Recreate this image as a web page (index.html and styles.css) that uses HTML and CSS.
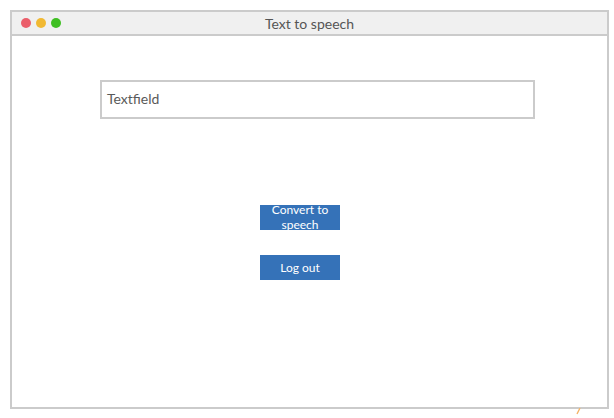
FILE: index.html
```html
<!DOCTYPE html>
<html>
<head>
<meta charset="utf-8">
<link rel="stylesheet" href="styles.css">
</head>
<body>
<div class="window">
  <div class="titlebar">
    <div class="lights">
      <span class="light red"></span>
      <span class="light yellow"></span>
      <span class="light green"></span>
    </div>
    <div class="title">Text to speech</div>
  </div>
  <div class="content">
    <div class="textfield">Textfield</div>
    <div class="btn btn-convert"><span>Convert to speech</span></div>
    <div class="btn btn-logout"><span>Log out</span></div>
  </div>
</div>
<svg class="mark" width="8" height="8" viewBox="0 0 8 8"><line x1="5" y1="0" x2="2" y2="6" stroke="#f4b466" stroke-width="1.4"/></svg>
</body>
</html>
```
FILE: styles.css
```css
html, body {
  margin: 0;
  padding: 0;
  background: #ffffff;
}
body {
  width: 614px;
  height: 418px;
  position: relative;
  overflow: hidden;
  font-family: Lato, "Liberation Sans", sans-serif;
}
.window {
  box-sizing: border-box;
  margin: 10px 0 0 10px;
  width: 599px;
  height: 399px;
  border: 2px solid #cbcbcb;
  display: flex;
  flex-direction: column;
}
.titlebar {
  height: 22px;
  flex: 0 0 22px;
  background: #f0f0f0;
  border-bottom: 2px solid #cbcbcb;
  position: relative;
  display: flex;
  align-items: center;
  justify-content: center;
}
.lights {
  position: absolute;
  left: 9px;
  top: 6px;
  display: flex;
  gap: 5px;
}
.light {
  width: 10px;
  height: 10px;
  border-radius: 50%;
  display: block;
}
.red { background: #eb5e6a; }
.yellow { background: #f1b933; }
.green { background: #3fbf23; }
.title {
  font-size: 14px;
  color: #555555;
  line-height: 22px;
  margin-top: 1px;
}
.content {
  flex: 1;
  display: flex;
  flex-direction: column;
  align-items: flex-start;
  padding: 44px 0 0 88px;
}
.textfield {
  box-sizing: border-box;
  width: 435px;
  height: 39px;
  border: 2px solid #cbcbcb;
  padding: 0 0 2px 5px;
  font-size: 14px;
  color: #595959;
  display: flex;
  align-items: center;
}
.btn {
  box-sizing: border-box;
  width: 80px;
  height: 25px;
  margin-left: 160px;
  background: #3572b8;
  color: #ffffff;
  font-size: 12px;
  line-height: 15px;
  text-align: center;
  display: flex;
  align-items: center;
  justify-content: center;
  overflow: hidden;
}
.btn span {
  display: block;
  width: 66px;
}
.btn-convert {
  margin-top: 86px;
  padding-bottom: 2px;
}
.btn-logout {
  margin-top: 25px;
}
.mark {
  position: absolute;
  left: 575px;
  top: 408px;
}
```
